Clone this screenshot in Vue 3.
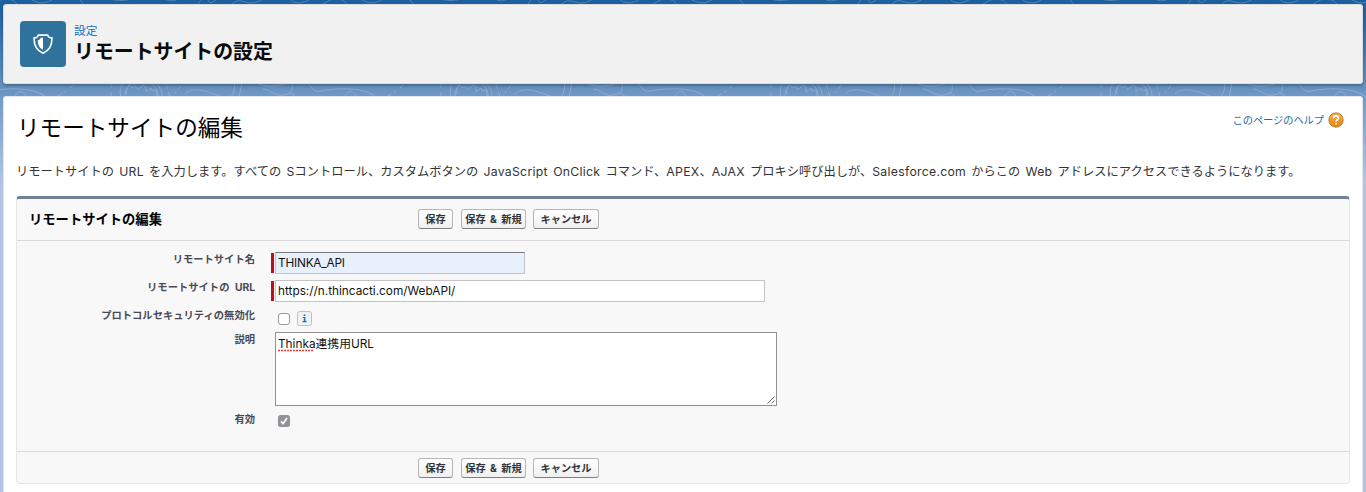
<script setup>
const buttons = ['保存', '保存 & 新規', 'キャンセル']
const tiles = [-187, 143, 473, 803, 1133, 1463]
</script>

<template>
  <div class="page">
    <svg class="backdrop" width="1366" height="492" viewBox="0 0 1366 492" aria-hidden="true">
      <defs>
        <g id="topo" fill="none" stroke="#fff" stroke-width="1">
          <path d="M-22 97C-25 89-20 82-16 78M-18 97C-18 92-17 88-14 85M19 97C20 90 14 83 9 79M15 97C16 91 12 86 9 84" />
          <path d="M-16 94C-17 91-16 88-13 85L-11 88-8 86-5 90 0 85 3 87 3 92 8 88 9 91 13 90 14 96" />
          <path d="M-32 84V97" stroke-dasharray="4 4" />
          <path d="M23 84L27 97M38 85L32 93M40 96L36 99" stroke-dasharray="5 3" />
          <path d="M42 94C50 86 64 91 79 97M91 83C93 88 90 95 87 98M99 83L96 97" />
          <path d="M113 83C124 88 133 86 142 84M149 83C151 93 146 94 140 95C133 97 126 89 120 89M146 92L153 97" />
          <path d="M165 83C168 86 170 93 178 91C190 88 219 87 230 95L235 99M201 98C204 91 210 88 214 98" />
          <path d="M245 96L253 91M257 88L261 84" stroke-dasharray="4 3" />
          <path d="M-45-6Q-20 8 2-8M-35-6Q-16 5-8-8M18-4Q28 6 40-4M55 4Q60-6 68 3L78-3M88 6Q92-2 102 2T124-4M145-2Q155 9 172-4M180 4Q196-7 205 5M219 0Q232 8 245-5M262-6L273 7" />
          <path d="M-54 112Q-48 134-60 142T-47 171M-53 180C-42 200-65 213-50 234M222 102C235 114 228 127 224 140M232 145Q220 168 234 185M222 198Q235 211 225 236" />
        </g>
      </defs>
      <use v-for="x in tiles" :key="x" href="#topo" :x="x" opacity=".22" />
    </svg>

    <header class="banner">
      <span class="tile">
        <svg width="20" height="20" viewBox="0 0 20 20">
          <path d="M5.3 1.1H14.7C15.2 3.1 16.7 4 19 3.9C19.1 11.3 16 16.8 10 19.2C4 16.8.9 11.3 1 3.9C3.3 4 4.8 3.1 5.3 1.1Z" fill="none" stroke="#fff" stroke-width="1.6" stroke-linejoin="round" />
          <path d="M10 3.7V15.8C6.4 14.1 4.8 10.8 4.6 6.4C6.4 5.9 7.2 5.2 7.7 3.7Z" fill="#fff" />
        </svg>
      </span>
      <div class="heading">
        <div class="crumb">設定</div>
        <h1>リモートサイトの設定</h1>
      </div>
    </header>

    <main class="sheet">
      <div class="top">
        <h2>リモートサイトの編集</h2>
        <a class="help"><span>このページのヘルプ</span>
          <svg width="16" height="16" viewBox="0 0 16 16">
            <defs><linearGradient id="amber" x2="0" y2="1"><stop stop-color="#f0b04c" /><stop offset="1" stop-color="#e5850c" /></linearGradient></defs>
            <circle cx="8" cy="8" r="7.2" fill="url(#amber)" stroke="#b5711c" stroke-width=".8" />
            <path d="M5.5 6.2C5.5 3.2 10.5 3.2 10.5 6C10.5 7.7 8.1 7.8 8.1 9.5M8.1 11V12.5" fill="none" stroke="#fff" stroke-width="1.7" />
          </svg>
        </a>
      </div>
      <p class="intro">リモートサイトの <b>URL</b> を入力します。すべての <b>S</b>コントロール、カスタムボタンの <b>JavaScript OnClick</b> コマンド、<b>APEX</b>、<b>AJAX</b> プロキシ呼び出しが、<b>Salesforce.com</b> からこの <b>Web</b> アドレスにアクセスできるようになります。</p>

      <section class="panel">
        <div class="bar head">
          <h3>リモートサイトの編集</h3>
          <div class="buttons"><button v-for="b in buttons" :key="b">{{ b }}</button></div>
        </div>
        <div class="form">
          <div class="row r1"><label>リモートサイト名</label><i class="req"></i><div class="input name"><span>THINKA_API</span></div></div>
          <div class="row r2"><label>リモートサイトの URL</label><i class="req"></i><div class="input url"><span>https://n.thincacti.com/WebAPI/</span></div></div>
          <div class="row r3"><label>プロトコルセキュリティの無効化</label><i class="check"></i>
            <svg class="info" width="15" height="15" viewBox="0 0 15 15"><rect x=".5" y=".5" width="14" height="14" rx="2" fill="#f1f2f3" stroke="#bfc1c3" /><path d="M6.7 3.5H8.4V5H6.7ZM5.7 6H8.4V10H9.6V11.2H5.5V10H6.8V7.1H5.7Z" fill="#1570cf" /></svg>
          </div>
          <div class="row r4"><label>説明</label>
            <div class="area"><span class="thinka">Thinka<svg class="wavy" width="36" height="3" viewBox="0 0 36 3"><path d="M0 1.5H36" stroke="#f33a35" stroke-width="1.6" stroke-dasharray="2 1" /></svg></span><span>連携用URL</span>
              <svg class="grip" width="8" height="8" viewBox="0 0 8 8"><path d="M.5 7.5L7.5.5M4.5 7.5L7.5 4.5" stroke="#555" stroke-width=".9" /></svg>
            </div>
          </div>
          <div class="row r5"><label>有効</label>
            <svg class="on" width="12" height="12" viewBox="0 0 12 12"><rect width="12" height="12" rx="2.5" fill="#929297" /><path d="M3 6.4L5.1 8.7L9 3" fill="none" stroke="#fff" stroke-width="1.6" /></svg>
          </div>
        </div>
        <div class="bar foot"><div class="buttons"><button v-for="b in buttons" :key="b">{{ b }}</button></div></div>
      </section>
    </main>
  </div>
</template>

<style>
body { margin: 0; overflow: hidden; }
</style>

<style scoped>
* { box-sizing: border-box; }
.page {
  position: relative; height: 492px; overflow: hidden; padding: 4px 3px 0;
  background: linear-gradient(#1b5f9f 0, #2b6ba9 25px, #6692c0 88px, #729bc7 98px, #b0c4df 180px, #b0c4df);
  font-family: Inter, "Noto Sans CJK JP", sans-serif;
}
.backdrop { position: absolute; left: 0; top: 0; }
.banner {
  position: relative; height: 80px; display: flex; padding: 17px 17px 0;
  background: #f2f1f1; border-radius: 4px; box-shadow: inset 0 0 0 1px #dcdcdc, 0 2px 3px #0004;
}
.tile { width: 46px; height: 46px; border-radius: 4px; background: #2f739c; display: flex; align-items: center; justify-content: center; }
.heading { margin-left: 8px; white-space: nowrap; font-family: "Noto Sans CJK JP", sans-serif; }
.crumb { margin-top: 1px; font-size: 11.7px; line-height: 15px; color: #1670c7; }
h1 { margin: 1px 0 0 0; font-size: 19.9px; line-height: 25px; font-weight: 700; color: #0b0b0b; }
.sheet {
  position: relative; margin-top: 12px; height: 410px; padding: 0 13px 0 14px;
  background: #fff; border-radius: 4px 4px 0 0; box-shadow: inset 0 0 0 1px #e2e5ea;
}
.top { display: flex; justify-content: space-between; height: 64px; white-space: nowrap; }
h2 { margin: 15px 0 0 0; font-size: 22.6px; line-height: 34px; font-weight: 400; color: #000; }
.help { display: flex; align-items: center; height: 16px; gap: 4px; margin: 16px 6px 0 0; font-size: 10.2px; color: #186ab0; }
.help span { margin-top: -2px; }
.intro { margin: 0 0 0 -1px; height: 36px; line-height: 24px; font-size: 12.25px; word-spacing: 1.7px; color: #333; white-space: nowrap; }
.intro b { font-weight: 400; letter-spacing: .28px; }
.panel {
  height: 288px; margin-left: -1px; border: 1px solid #e7e7e7; border-top: 3px solid #747e96;
  border-radius: 4px; background: #f8f8f8;
}
.bar { display: flex; align-items: center; }
.head { height: 42px; padding-bottom: 1px; border-bottom: 1px solid #d9d9d9; }
h3 { margin: 0 0 0 12px; width: 389px; font-size: 13.3px; line-height: 20px; color: #000; white-space: nowrap; }
.buttons { display: flex; }
button {
  height: 20px; padding: 0; border: 1px solid #b5b5b5; border-bottom-color: #7f7f7f; border-radius: 3px;
  background: linear-gradient(#fff, #f0f0f0); font: 700 10.2px/16px Inter, "Noto Sans CJK JP", sans-serif;
  word-spacing: 2px; color: #333; white-space: nowrap;
}
button:nth-child(1) { width: 35px; }
button:nth-child(2) { width: 65px; margin: 0 7px 0 8px; }
button:nth-child(3) { width: 66px; }
.form { height: 210px; padding-top: 11px; }
.row { display: flex; align-items: flex-start; }
label { width: 238px; margin-right: 20px; text-align: right; font-size: 10.3px; line-height: 15px; font-weight: 700; word-spacing: 3px; color: #4a4a56; white-space: nowrap; flex: none; }
.r1, .r2 { height: 28px; }
.r3 { height: 24px; }
.r4 { height: 80px; }
.r1 label, .r2 label { margin-right: 16px; }
.req { width: 3px; height: 20px; margin: 1px 1px 0 0; background: #c00d18; }
.input { height: 22px; border: 1px solid #c4c4c4; background: #fff; padding-left: 2px; font-size: 11.8px; line-height: 20px; color: #111; white-space: nowrap; }
.name { width: 250px; background: #e8effd; border-top: 1px solid #777; letter-spacing: -.2px; }
.url { width: 490px; }
.check { width: 12px; height: 12px; margin: 5px 7px 0 3px; border: 1px solid #999; border-radius: 3px; background: #fff; }
.info { margin-top: 3px; }
.area { position: relative; width: 502px; height: 74px; border: 1px solid #909090; background: #fff; padding-left: 2px; font-size: 11.8px; line-height: 22px; color: #111; }
.thinka { position: relative; }
.wavy { position: absolute; left: 0; bottom: -1px; }
.grip { position: absolute; right: 1px; bottom: 1px; }
.on { margin: 3px 0 0 3px; }
.foot { height: 32px; padding-left: 401px; border-top: 1px solid #d9d9d9; }
</style>
